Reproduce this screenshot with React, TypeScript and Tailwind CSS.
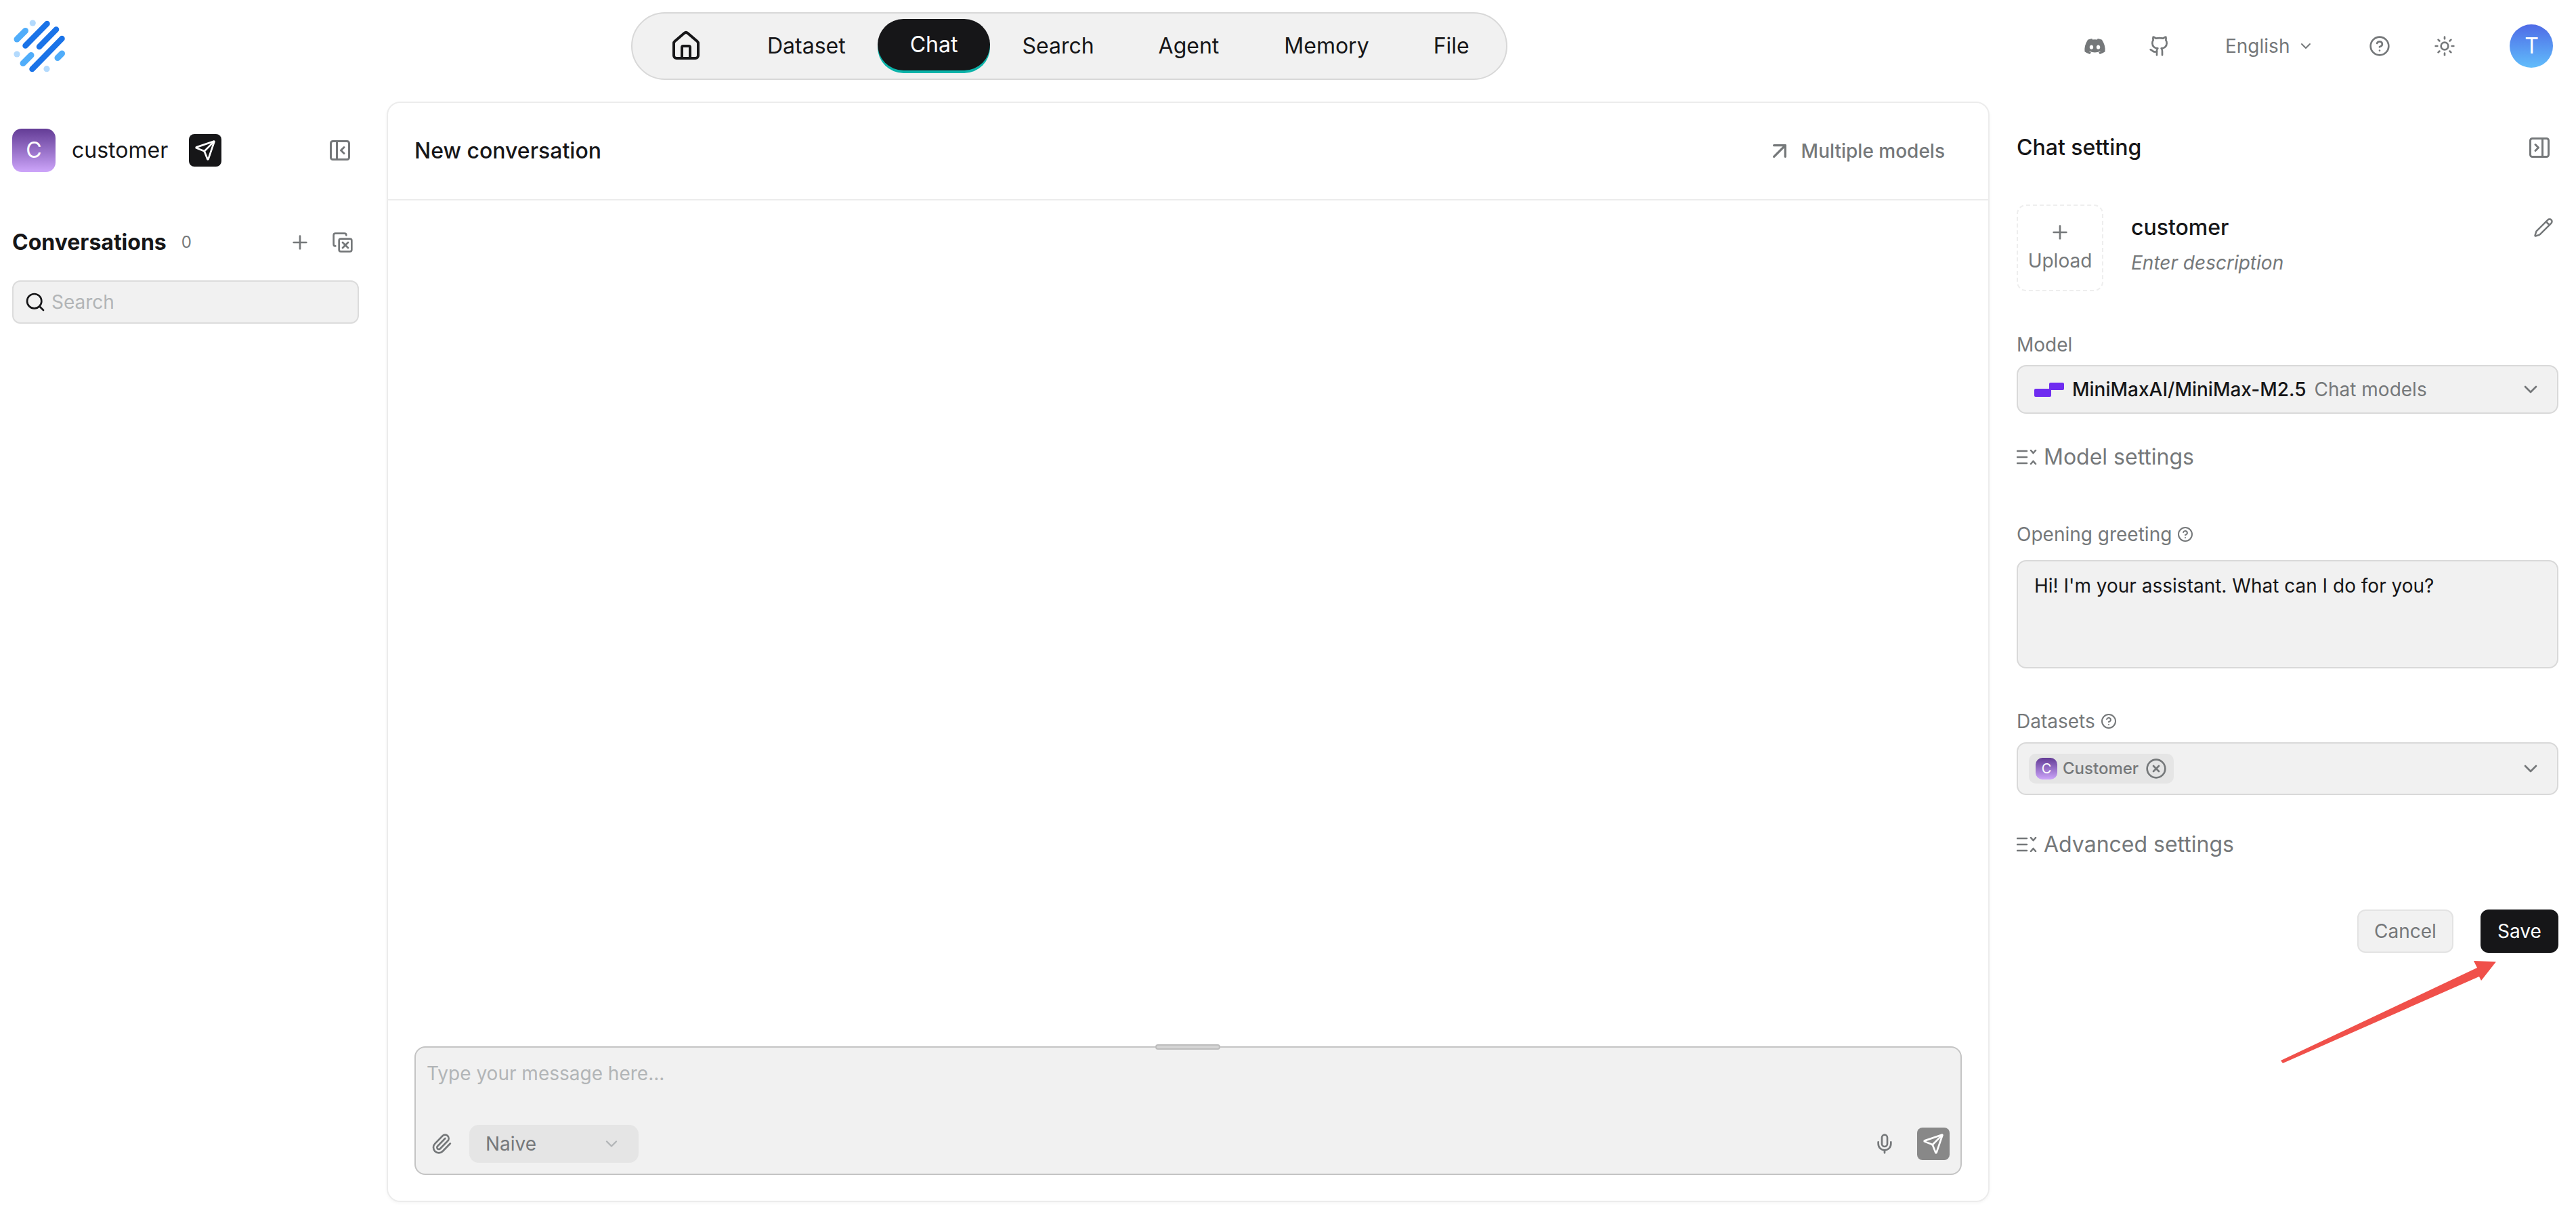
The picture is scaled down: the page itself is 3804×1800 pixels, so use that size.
import React from "react";
import {
  House, Send, PanelLeftClose, PanelRightClose, Plus, CopyX, Search, Paperclip, ChevronDown,
  Mic, CircleHelp, Sun, Pencil, CircleX, Github, ArrowUpRight,
} from "lucide-react";
import { FaDiscord } from "react-icons/fa6";

function Logo() {
  return (
    <svg width="112" height="136" viewBox="0 0 112 136" fill="none" strokeLinecap="round">
      <circle cx="48.3" cy="34" r="4.6" fill="#b3dafd" />
      <circle cx="25" cy="80" r="4.6" fill="#b3dafd" />
      <circle cx="69" cy="101.7" r="4.6" fill="#b3dafd" />
      <g stroke="#50adfa" strokeWidth="9">
        <line x1="25" y1="58" x2="37.5" y2="45.5" />
        <line x1="34" y1="93.5" x2="46" y2="81.5" />
        <line x1="85" y1="85.5" x2="91.5" y2="79" />
      </g>
      <g stroke="#1a73e8" strokeWidth="8.5">
        <line x1="37.5" y1="67.5" x2="69.5" y2="35" />
        <line x1="58" y1="69" x2="83" y2="43.5" />
        <line x1="47.5" y1="102" x2="91.5" y2="57" />
      </g>
    </svg>
  );
}

function SettingsIcon() {
  return (
    <svg width="30" height="22" viewBox="0 0 30 22" fill="none" stroke="#75787a" strokeWidth="2.6" strokeLinecap="round" strokeLinejoin="round">
      <path d="M1 2h14M1 11h14M1 20h14" />
      <path d="M21 1l3.5 4L28 1M21 21l3.5-4 3.5 4" />
    </svg>
  );
}

function MiniMaxLogo() {
  return (
    <svg width="44" height="21" viewBox="0 0 44 21" className="shrink-0">
      <path d="M2 9h20v-7a2 2 0 0 1 2-2h18a2 2 0 0 1 2 2v7a2 2 0 0 1-2 2H25v8a2 2 0 0 1-2 2H2a2 2 0 0 1-2-2v-8a2 2 0 0 1 2-2z" fill="#6f2cf0" />
    </svg>
  );
}

function NavItem({ label, active, wide }: { label: string; active?: boolean; wide?: boolean }) {
  return (
    <div
      className={
        active
          ? "h-[76px] self-start mt-[8px] px-[48px] flex items-center rounded-[38px] bg-[#161618] text-white shadow-[0_4px_0_0_#0bb3a9]"
          : wide
            ? "h-[80px] px-[48px] flex items-center text-[#161618]"
            : "h-[80px] px-[47px] flex items-center text-[#161618]"
      }
    >
      {label}
    </div>
  );
}

export default function App() {
  return (
    <div className="relative w-[3804px] h-[1800px] bg-white overflow-hidden font-['Inter',sans-serif] text-[#161618]">
      <header className="h-[136px] flex items-center">
        <div className="w-[932px] shrink-0">
          <Logo />
        </div>
        <nav className="w-[1294px] h-[100px] shrink-0 flex items-center pl-[6px] pr-[6px] rounded-[50px] border-2 border-[#d8d8d8] bg-[#f1f1f1] text-[32px]">
          <div className="w-[146px] h-[80px] flex items-center justify-center">
            <House size={48} strokeWidth={2} color="#161618" />
          </div>
          <NavItem label="Dataset" />
          <NavItem label="Chat" active />
          <NavItem label="Search" />
          <NavItem label="Agent" wide />
          <NavItem label="Memory" wide />
          <NavItem label="File" />
        </nav>
        <div className="ml-[843px] flex items-center text-[#75787a]">
          <div className="w-[48px] h-[48px] flex items-center justify-center">
            <FaDiscord size={33} color="#75787a" />
          </div>
          <div className="ml-[48px] w-[48px] h-[48px] flex items-center justify-center">
            <Github size={32} color="#75787a" />
          </div>
          <div className="ml-[73px] flex items-center gap-[12px] text-[28px]">
            English
            <ChevronDown size={24} color="#75787a" />
          </div>
          <div className="ml-[73px] w-[48px] h-[48px] flex items-center justify-center">
            <CircleHelp size={32} color="#75787a" />
          </div>
          <div className="ml-[48px] w-[48px] h-[48px] flex items-center justify-center">
            <Sun size={32} color="#75787a" />
          </div>
          <div className="ml-[72px] w-[64px] h-[64px] rounded-full bg-gradient-to-b from-[#4f6ae6] to-[#62bdfb] flex items-center justify-center text-white text-[32px]">
            T
          </div>
        </div>
      </header>

      <div className="mt-[14px] flex h-[1625px]">
        <aside className="w-[571px] shrink-0 pl-[18px] pr-[41px]">
          <div className="mt-[40px] h-[64px] flex items-center">
            <div className="w-[64px] h-[64px] rounded-[14px] bg-gradient-to-b from-[#643c96] to-[#cda5fa] flex items-center justify-center text-white text-[32px]">
              C
            </div>
            <div className="ml-[24px] text-[32px]">customer</div>
            <div className="ml-[31px] w-[48px] h-[48px] rounded-[8px] bg-[#161618] flex items-center justify-center">
              <Send size={32} color="#ffffff" />
            </div>
            <div className="ml-auto mr-[10px] text-[#75787a]">
              <PanelLeftClose size={36} color="#75787a" />
            </div>
          </div>
          <div className="mt-[88px] h-[32px] flex items-center">
            <div className="text-[32px] font-bold">Conversations</div>
            <div className="ml-[22px] text-[24px] text-[#75787a]">0</div>
            <Plus size={32} color="#75787a" className="ml-auto" />
            <CopyX size={32} color="#75787a" className="ml-[31px] mr-[8px]" />
          </div>
          <div className="mt-[40px] h-[64px] rounded-[12px] border-2 border-[#dcdcdc] bg-[#f1f1f1] flex items-center pl-[16px]">
            <Search size={32} color="#161618" />
            <span className="ml-[8px] text-[28px] text-[#b2b5b7]">Search</span>
          </div>
        </aside>

        <main className="w-[2367px] shrink-0 h-full rounded-[20px] border-2 border-[#ececec] shadow-[0_2px_4px_rgba(0,0,0,0.04)] flex flex-col">
          <div className="h-[144px] shrink-0 border-b-2 border-[#ececec] flex items-center justify-between pl-[39px] pr-[64px]">
            <div className="text-[32px] font-[450]">New conversation</div>
            <div className="flex items-center gap-[12px] text-[28px] font-medium text-[#75787a]">
              <ArrowUpRight size={40} color="#75787a" />
              Multiple models
            </div>
          </div>
          <div className="flex-1" />
          <div className="px-[39px] pb-[38px]">
            <div className="relative h-[190px] rounded-[16px] border-2 border-[#c4c4c4] bg-[#f1f1f1] flex flex-col">
              <div className="absolute left-[1092px] top-[-5px] w-[96px] h-[8px] rounded-full border-2 border-[#bdbdbd] bg-[#d4d4d4]" />
              <div className="pl-[16px] pt-[20px] text-[28px] leading-[36px] text-[#b2b5b7]">Type your message here...</div>
              <div className="mt-auto pb-[16px] flex items-center pl-[22px] pr-[16px]">
                <Paperclip size={32} color="#75787a" />
                <div className="ml-[25px] w-[250px] h-[56px] rounded-[14px] bg-[#e5e5e5] flex items-center justify-between pl-[24px] pr-[26px] text-[28px] text-[#75787a]">
                  Naive
                  <ChevronDown size={28} color="#b2b5b7" />
                </div>
                <Mic size={32} color="#75787a" className="ml-auto" />
                <div className="ml-[32px] w-[48px] h-[48px] rounded-[8px] bg-[#888888] flex items-center justify-center">
                  <Send size={32} color="#ffffff" />
                </div>
              </div>
            </div>
          </div>
        </main>

        <section className="flex-1 pl-[40px] pr-[26px]">
          <div className="mt-[50px] h-[36px] flex items-center justify-between">
            <div className="text-[32px] font-[450]">Chat setting</div>
            <PanelRightClose size={36} color="#75787a" className="mr-[10px]" />
          </div>
          <div className="mt-[66px] h-[128px] flex">
            <div className="w-[128px] h-[128px] rounded-[14px] border-2 border-dashed border-[#eeeeee] flex flex-col items-center justify-center text-[#75787a]">
              <Plus size={32} color="#75787a" />
              <div className="mt-[6px] text-[28px] leading-[40px]">Upload</div>
            </div>
            <div className="ml-[41px] flex-1 flex flex-col">
              <div className="mt-[14px] h-[40px] flex items-center justify-between">
                <div className="text-[32px] font-medium">customer</div>
                <Pencil size={30} color="#75787a" className="mr-[7px]" />
              </div>
              <div className="mt-[12px] h-[40px] flex items-center text-[28px] italic text-[#75787a]">Enter description</div>
            </div>
          </div>

          <div className="mt-[61px] h-[36px] flex items-center text-[28px] text-[#75787a]">Model</div>
          <div className="mt-[12px] h-[72px] rounded-[14px] border-2 border-[#d9d9d9] bg-[#f1f1f1] flex items-center pl-[24px] pr-[23px] text-[28px]">
            <MiniMaxLogo />
            <span className="ml-[12px] font-medium">MiniMaxAI/MiniMax-M2.5</span>
            <span className="ml-[12px] text-[#75787a]">Chat models</span>
            <ChevronDown size={32} color="#75787a" className="ml-auto" />
          </div>

          <div className="mt-[44px] h-[40px] flex items-center gap-[10px] text-[32px] text-[#75787a]">
            <SettingsIcon />
            Model settings
          </div>

          <div className="mt-[76px] h-[36px] flex items-center gap-[8px] text-[28px] text-[#75787a]">
            Opening greeting
            <CircleHelp size={24} color="#75787a" />
          </div>
          <div className="mt-[20px] h-[160px] rounded-[14px] border-2 border-[#d9d9d9] bg-[#f1f1f1] px-[24px] pt-[16px] text-[28px] leading-[40px]">
            Hi! I'm your assistant. What can I do for you?
          </div>

          <div className="mt-[60px] h-[36px] flex items-center gap-[8px] text-[28px] text-[#75787a]">
            Datasets
            <CircleHelp size={24} color="#75787a" />
          </div>
          <div className="mt-[13px] h-[78px] rounded-[14px] border-2 border-[#d9d9d9] bg-[#f1f1f1] flex items-center pl-[16px] pr-[23px]">
            <div className="h-[44px] rounded-[10px] bg-[#e5e5e5] flex items-center pl-[10px] pr-[10px] text-[24px] font-medium text-[#75787a]">
              <div className="w-[32px] h-[32px] rounded-[10px] bg-gradient-to-b from-[#643c96] to-[#cda5fa] flex items-center justify-center text-white text-[20px] font-normal">
                C
              </div>
              <span className="ml-[8px]">Customer</span>
              <CircleX size={32} color="#75787a" className="ml-[10px]" />
            </div>
            <ChevronDown size={32} color="#75787a" className="ml-auto" />
          </div>

          <div className="mt-[53px] h-[40px] flex items-center gap-[10px] text-[32px] text-[#75787a]">
            <SettingsIcon />
            Advanced settings
          </div>

          <div className="mt-[76px] flex justify-end gap-[40px] text-[28px]">
            <div className="w-[142px] h-[64px] rounded-[12px] border-2 border-[#e3e3e3] bg-[#f1f1f1] flex items-center justify-center text-[#75787a]">Cancel</div>
            <div className="w-[115px] h-[64px] rounded-[12px] bg-[#161618] flex items-center justify-center text-white">Save</div>
          </div>
        </section>
      </div>

      <svg className="absolute left-[3360px] top-[1410px]" width="340" height="170" viewBox="3360 1410 340 170">
        <polygon points="3368,1566 3658,1429 3653,1419 3686,1420 3664,1448 3661,1442 3371,1570" fill="#f0504a" />
      </svg>
    </div>
  );
}
